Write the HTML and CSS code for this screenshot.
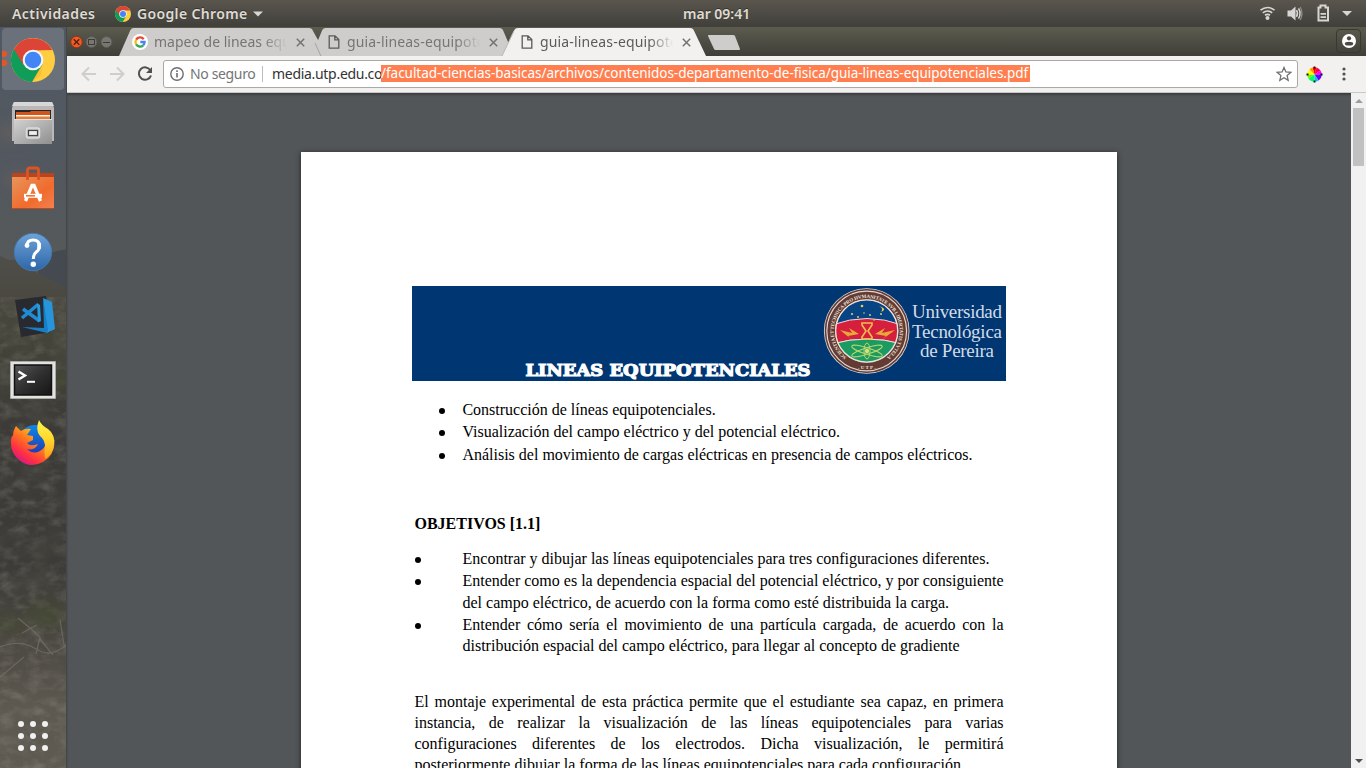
FILE: index.html
```html
<!DOCTYPE html>
<html lang="es">
<head>
<meta charset="utf-8">
<title>guia-lineas-equipotenciales.pdf</title>
<link rel="stylesheet" href="styles.css">
</head>
<body>
<svg class="defs" width="0" height="0">
  <defs>
    <symbol id="chrome" viewBox="0 0 48 48">
      <circle cx="24" cy="24" r="24" fill="#ffcd40"/>
      <path d="M24 24 3.2 12A24 24 0 0 0 23 48L34.5 29Z" fill="#0f9d58"/>
      <path d="M3.2 12A24 24 0 0 1 45.2 13.2L24 13.5 13.5 29.5Z" fill="#db4437"/>
      <path d="M34 28 23 48 33 40Z" fill="#f1b52c" opacity=".5"/>
      <circle cx="24" cy="24" r="11.3" fill="#f4f5f7"/>
      <circle cx="24" cy="24" r="9" fill="#4285f4"/>
    </symbol>
    <symbol id="page" viewBox="0 0 12 14">
      <path d="M1.2.8H7L10.8 4.6V13.2H1.2ZM6.8.8V4.8H10.8" fill="none" stroke="currentColor" stroke-width="1.3"/>
    </symbol>
    <symbol id="close" viewBox="0 0 9 9">
      <path d="M.8.8 8.2 8.2M8.2.8.8 8.2" stroke="currentColor" stroke-width="1.5"/>
    </symbol>
    <linearGradient id="gOrange" x2="1" y2="1"><stop stop-color="#e8955d"/><stop offset=".6" stop-color="#f06b2c"/><stop offset="1" stop-color="#f48152"/></linearGradient>
    <linearGradient id="gGrey" x2="1" y2="1"><stop stop-color="#d2d2d2"/><stop offset="1" stop-color="#8f8f8f"/></linearGradient>
    <linearGradient id="gBlue" x2="0" y2="1"><stop stop-color="#6ea3d8"/><stop offset="1" stop-color="#2d66a9"/></linearGradient>
    <linearGradient id="gTerm" x2="1" y2="1"><stop stop-color="#575757"/><stop offset=".5" stop-color="#303030"/><stop offset="1" stop-color="#151515"/></linearGradient>
    <linearGradient id="gFox" x1=".9" y1="0" x2=".2" y2=".9"><stop stop-color="#fff14a"/><stop offset=".3" stop-color="#ffb41c"/><stop offset=".58" stop-color="#ff6a24"/><stop offset=".82" stop-color="#ff2e45"/><stop offset="1" stop-color="#d91a83"/></linearGradient>
    <linearGradient id="gTail" x2="0" y2="1"><stop stop-color="#fff44f"/><stop offset=".5" stop-color="#ffd72b"/><stop offset="1" stop-color="#ff9c1c"/></linearGradient>
    <linearGradient id="gGlobe" x2="0" y2="1"><stop stop-color="#0d87e8"/><stop offset="1" stop-color="#252da8"/></linearGradient>
  </defs>
</svg>

<header class="topbar">
  <span class="activities">Actividades</span>
  <svg class="app-icon" viewBox="0 0 48 48"><use href="#chrome"/></svg>
  <span class="app-name">Google Chrome</span>
  <svg class="caret" viewBox="0 0 10 6"><path d="M0 .5H10L5 5.5Z"/></svg>
  <span class="clock">mar 09:41</span>
  <svg class="status" viewBox="0 0 106 27">
    <g fill="none" stroke="#d6d6d3" stroke-width="1.7">
      <path d="M.5 10.2Q7.500 4.800 14.500 10.200M2.800 12.800Q7.500 9.200 12.200 12.800M5 15.300Q7.500 13.400 10 15.300"/>
    </g>
    <circle cx="7.500" cy="18" r="2" fill="#d6d6d3"/>
    <path d="M27.500 10.500h3.500l4.500-4v14l-4.500-4h-3.500Z" fill="#d6d6d3"/>
    <path d="M36.500 10.200q2 3.300 0 6.600M38.500 8.400q3.200 5.100 0 10.200" fill="none" stroke="#d6d6d3" stroke-width="1.500"/>
    <path d="M40.200 7q3.500 6.500 0 13" fill="none" stroke="#8b8a84" stroke-width="1.300"/>
    <path d="M58.500 7.500h2v-2h5v2h2.500v13H58.500Z" fill="none" stroke="#d6d6d3" stroke-width="2"/>
    <path d="M60.500 13.800h5.500M60.500 17.200h5.500" stroke="#d6d6d3" stroke-width="1.800"/>
    <path d="M82 11h10l-5 5Z" fill="#d6d6d3"/>
  </svg>
</header>

<div class="desktop">
  <nav class="dock">
    <svg class="wallpaper" viewBox="0 0 67 741" preserveAspectRatio="none">
      <defs>
        <linearGradient id="sky" x2="0" y2="1"><stop stop-color="#505963"/><stop offset=".2" stop-color="#53585f"/><stop offset=".32" stop-color="#555958"/></linearGradient>
        <linearGradient id="rock" x2="0" y2="1"><stop stop-color="#504e4a"/><stop offset=".14" stop-color="#46453a"/><stop offset=".32" stop-color="#3c3b37"/><stop offset=".6" stop-color="#3c3b37"/><stop offset=".76" stop-color="#4c4942"/><stop offset=".88" stop-color="#5d5951"/><stop offset="1" stop-color="#5e5a52"/></linearGradient>
        <filter id="grain" x="0" y="0" width="1" height="1"><feTurbulence type="fractalNoise" baseFrequency=".07 .11" numOctaves="5" seed="8"/><feColorMatrix values="0 0 0 0 .5  0 0 0 0 .47  0 0 0 0 .42  1.8 0 0 0 -.75"/></filter>
        <filter id="dark" x="0" y="0" width="1" height="1"><feTurbulence type="fractalNoise" baseFrequency=".04 .03" numOctaves="4" seed="3"/><feColorMatrix values="0 0 0 0 .1  0 0 0 0 .1  0 0 0 0 .08  0 1.8 0 0 -.75"/></filter>
        <filter id="soft" x="-.5" y="-.5" width="2" height="2"><feGaussianBlur stdDeviation="6"/></filter>
      </defs>
      <rect width="67" height="741" fill="url(#sky)"/>
      <g filter="url(#soft)" fill="#68605d" opacity=".6"><ellipse cx="10" cy="105" rx="13" ry="10"/><ellipse cx="50" cy="22" rx="12" ry="9"/><ellipse cx="22" cy="152" rx="18" ry="8"/></g>
      <path d="M40 228 67 222V310H30Z" fill="#444a50"/>
      <path d="M0 229 9 233 23 232 32 243 49 252 67 261V741H0Z" fill="url(#rock)"/>
      <g opacity=".28"><path d="M0 270H67V741H0Z" filter="url(#grain)"/><path d="M0 270H67V741H0Z" filter="url(#dark)"/></g>
      <g fill="#454b32" opacity=".65" filter="url(#soft)"><ellipse cx="45" cy="588" rx="18" ry="12"/><ellipse cx="9" cy="598" rx="12" ry="8"/><ellipse cx="52" cy="353" rx="18" ry="8"/></g>
      <g fill="none" stroke="#77736c" stroke-width="1.300" opacity=".65"><path d="M0 620Q20 612 36 622T67 617M18 591 31 602 40 610 36 627M22 606 37 598M40 612 53 628M60 593 64 618M0 650 24 630"/></g>
    </svg>
    <div class="dock-item active">
      <i class="dot"></i><i class="dot second"></i>
      <svg width="44" height="44" viewBox="0 0 48 48"><use href="#chrome"/></svg>
    </div>
    <div class="dock-item">
      <svg width="44" height="46" viewBox="0 0 44 46">
        <path d="M3 1H41L43 7V40H1V7Z" fill="#b8b8b8"/><path d="M3 1H41L43 5H1Z" fill="#d7d7d7"/>
        <path d="M4 9H40V20H4Z" fill="#272727"/><path d="M5 11H19L20 10H39V19H5Z" fill="#cf571f"/><path d="M5 14H39V19H5Z" fill="#fff2e4"/><path d="M5 15.500H39V19H5Z" fill="#df8239"/>
        <path d="M3 18H41V43H3Z" fill="url(#gGrey)"/><path d="M3 18.500H41" stroke="#e1e1e1"/>
        <rect x="15.500" y="27" width="13" height="10" rx="2" fill="#bdbdbd" stroke="#dbdbdb" stroke-width="1.500"/><rect x="17.500" y="29.500" width="9" height="5" fill="#eee" stroke="#444" stroke-width="1.200"/>
      </svg>
    </div>
    <div class="dock-item">
      <svg width="44" height="46" viewBox="0 0 44 46">
        <path d="M1 8H43V16H1Z" fill="#b9441d"/><path d="M1 12H43V44H1Z" fill="url(#gOrange)"/><path d="M1 43.500H43" stroke="#b94b21"/>
        <path d="M16.500 15V5Q16.500 3 19 3H25Q27.500 3 27.500 5V15" fill="none" stroke="#dd5424" stroke-width="2.800"/>
        <path d="M14.500 36 21 20.500H23L29.500 36" fill="none" stroke="#fff" stroke-width="3.300"/><path d="M13 30.800H31" stroke="#fff" stroke-width="4"/><path d="M15 30.800H24" stroke="#f17337" stroke-width="1.600"/>
      </svg>
    </div>
    <div class="dock-item">
      <svg width="42" height="42" viewBox="0 0 42 42">
        <circle cx="21" cy="21" r="18.700" fill="url(#gBlue)" stroke="#4778ac"/>
        <path d="M15 14Q15.500 9 21 9Q27.500 9 27.500 15Q27.500 18.500 24.300 21Q21.300 23.500 21.300 28" fill="none" stroke="#fff" stroke-width="3"/><path d="M27 12V18" stroke="#fff" stroke-width="3.500"/><circle cx="15" cy="14.500" r="2.400" fill="#fff"/><circle cx="21.300" cy="33.300" r="2.700" fill="#fff"/>
      </svg>
    </div>
    <div class="dock-item">
      <svg width="44" height="44" viewBox="0 0 44 44">
        <path d="M4 6 35 2 40 38 10 43Z" fill="#292a30"/>
        <path d="M32 4 41 8 44 35 36 39Z" fill="#2795dc"/><path d="M32 4 37 36 36 39 11 33 33 34Z" fill="#167fc6"/>
        <path d="M12 15 28 26.500M11 24 27 10.500" fill="none" stroke="#1f8bd4" stroke-width="3.500"/><path d="M26 9 29 11 30 27 27 28.500Z" fill="#249be3"/>
      </svg>
    </div>
    <div class="dock-item">
      <svg width="46" height="38" viewBox="0 0 46 38">
        <path d="M.5.500H45.500V37.500H.5Z" fill="#e2e2e0" stroke="#a9a9a7"/><path d="M4.500 4H41.500V34H4.500Z" fill="url(#gTerm)" stroke="#111" stroke-width="1.500"/>
        <path d="M8.500 10.500 15 14.500 8.500 18.500" fill="none" stroke="#fff" stroke-width="2.400"/><path d="M17 20.800H25" stroke="#fff" stroke-width="2"/>
      </svg>
    </div>
    <div class="dock-item fox">
      <svg width="46" height="46" viewBox="0 0 46 46">
        <circle cx="25" cy="22" r="17" fill="url(#gGlobe)"/>
        <path d="M6 6 11 11Q15 8 21 9L17 15 23 16V20L17 23Q20 27 28 24Q25 31 17 29Q23 35 30 31Q37 27 36 18Q45 14 44 22Q45 35 33 42Q20 49 9 40Q-2 31 2 15L3 17Q3 10 6 6Z" fill="url(#gFox)"/>
        <path d="M29 0Q31 5 38 9Q46 15 44 26Q42 35 35 39Q34 31 35 25Q34 19 30 16Q25 10 29 0Z" fill="url(#gTail)"/>
      </svg>
    </div>
    <svg class="launcher" width="32" height="32" viewBox="0 0 32 32" fill="#f1f1ef">
      <circle cx="4" cy="4" r="3"/><circle cx="16" cy="4" r="3"/><circle cx="28" cy="4" r="3"/>
      <circle cx="4" cy="16" r="3"/><circle cx="16" cy="16" r="3"/><circle cx="28" cy="16" r="3"/>
      <circle cx="4" cy="28" r="3"/><circle cx="16" cy="28" r="3"/><circle cx="28" cy="28" r="3"/>
    </svg>
  </nav>

  <main class="window">
    <div class="tabstrip">
      <svg class="window-buttons" width="49" height="29" viewBox="0 0 49 29">
        <circle cx="9.500" cy="15" r="5.800" fill="#f05a25" stroke="#893518"/><path d="M6.700 12.200 12.300 17.800M12.300 12.200 6.700 17.800" stroke="#4d2012" stroke-width="1.300"/>
        <circle cx="24.500" cy="15" r="5.500" fill="#777670" stroke="#585750"/><rect x="21.500" y="12.500" width="6" height="5" fill="none" stroke="#3d3c37"/>
        <circle cx="39.500" cy="15" r="5.500" fill="#777670" stroke="#585750"/><path d="M36 15.500H43" stroke="#3d3c37"/>
      </svg>
      <div class="tab first">
        <svg class="tab-shape" viewBox="0 0 208 28" preserveAspectRatio="none"><path d="M0 28 11 3Q12 0 15 0H190Q193 0 194 3L208 28Z" fill="#cfcdcb"/></svg>
        <svg class="favicon google" viewBox="0 0 16 16"><circle cx="8" cy="8" r="8" fill="#fff"/><g fill="none" stroke-width="2.300"><path d="M11.700 5.200A4.600 4.600 0 0 0 4.100 5.700" stroke="#ea4335"/><path d="M4.100 5.700A4.600 4.600 0 0 0 4.100 10.300" stroke="#fbbc05"/><path d="M4.100 10.300A4.600 4.600 0 0 0 11.200 11.300" stroke="#34a853"/><path d="M11.200 11.300A4.600 4.600 0 0 0 12.600 8H8.300" stroke="#4285f4"/></g></svg>
        <span class="tab-title">mapeo de lineas equi</span>
        <svg class="tab-close"><use href="#close"/></svg>
      </div>
      <div class="tab second-tab">
        <svg class="tab-shape" viewBox="0 0 208 28" preserveAspectRatio="none"><path d="M5 28 0 17 6 3Q7 0 10 0H188Q191 0 192 3L203 28Z" fill="#cfcdcb"/><path d="M5 28-1 15" stroke="#a5a3a1"/></svg>
        <svg class="favicon"><use href="#page"/></svg>
        <span class="tab-title">guia-lineas-equipote</span>
        <svg class="tab-close"><use href="#close"/></svg>
      </div>
      <div class="tab current">
        <svg class="tab-shape" viewBox="0 0 208 28" preserveAspectRatio="none"><path d="M0 28 12 3Q13 0 16 0H190Q193 0 194 3L206 28Z" fill="#f2f1f0"/><path d="M0 28 12 3" stroke="#b9b7b5"/></svg>
        <svg class="favicon"><use href="#page"/></svg>
        <span class="tab-title">guia-lineas-equipote</span>
        <svg class="tab-close"><use href="#close"/></svg>
      </div>
      <svg class="new-tab" width="34" height="17" viewBox="0 0 34 17"><path d="M1.500 1H26Q27.500 1 28 2L33 15Q33 16 32 16H8.500Q7.500 16 7 15L1 2Q1 1 1.500 1Z" fill="#cfcdcb"/></svg>
      <div class="profile"><svg width="14" height="14" viewBox="0 0 14 14"><circle cx="7" cy="7" r="7" fill="#fff"/><circle cx="7" cy="4.300" r="2.100" fill="#494941"/><ellipse cx="7" cy="9.700" rx="4.200" ry="1.900" fill="#494941"/></svg></div>
    </div>

    <div class="toolbar">
      <svg class="nav-icons" width="96" height="36" viewBox="0 0 96 36">
        <g fill="none" stroke="#cfcecd" stroke-width="2"><path d="M29 18H16M22 11.500 15.500 18 22 24.500M43 18H56M50 11.500 56.500 18 50 24.500"/></g>
        <path d="M83.500 14.500A6.200 6.200 0 1 0 84 19.500" fill="none" stroke="#505050" stroke-width="2"/><path d="M85 11V17H79Z" fill="#505050"/>
      </svg>
      <div class="omnibox">
        <svg class="info" width="14" height="14" viewBox="0 0 14 14"><circle cx="7" cy="7" r="6.200" fill="none" stroke="#6c6c6c" stroke-width="1.400"/><path d="M7 6V10.500M7 3.300V4.900" stroke="#6c6c6c" stroke-width="1.600"/></svg>
        <span class="security">No seguro</span><i class="divider"></i>
        <span class="host">media.utp.edu.co</span><span class="selected">/facultad-ciencias-basicas/archivos/contenidos-departamento-de-fisica/guia-lineas-equipotenciales.pdf</span>
        <svg class="star" width="16" height="16" viewBox="0 0 16 16"><path d="M8 1.500 9.900 6 14.800 6.400 11.100 9.600 12.200 14.300 8 11.800 3.800 14.300 4.900 9.600 1.200 6.400 6.100 6Z" fill="none" stroke="#707070" stroke-width="1.300"/></svg>
      </div>
      <svg class="wheel" width="17" height="17" viewBox="-8.500 -8.500 17 17">
        <path d="M0 0-2-7A7.300 7.300 0 0 1 2-7Z" fill="#f00"/><path d="M0 0 2-7A7.300 7.300 0 0 1 6-4Z" fill="#f04"/><path d="M0 0 6-4A7.300 7.300 0 0 1 7.200 0Z" fill="#f0f"/><path d="M0 0H7.200A7.300 7.300 0 0 1 4 6Z" fill="#60f"/><path d="M0 0 4 6A7.300 7.300 0 0 1 0 7.300Z" fill="#18b8ff"/><path d="M0 0V7.300A7.300 7.300 0 0 1-6 4Z" fill="#0f6"/><path d="M0 0-6 4A7.300 7.300 0 0 1-7.200 0Z" fill="#6f0"/><path d="M0 0H-7.200A7.300 7.300 0 0 1-5-5Z" fill="#ff0"/><path d="M0 0-5-5A7.300 7.300 0 0 1-2-7Z" fill="#f90"/>
        <path d="M0-8V-6M0 6V8M-8 0H-6M6 0H8" stroke="#111" stroke-width="1.800"/>
      </svg>
      <svg class="menu" width="4" height="16" viewBox="0 0 4 16" fill="#505050"><circle cx="2" cy="3" r="1.600"/><circle cx="2" cy="8" r="1.600"/><circle cx="2" cy="13" r="1.600"/></svg>
    </div>

    <div class="viewer">
      <article class="paper">
        <svg class="banner" width="594" height="95" viewBox="0 0 594 95">
          <defs><clipPath id="sealClip"><circle cx="454.700" cy="45" r="31"/></clipPath><path id="ring" d="M434.600 71.200A33 33 0 1 1 474.800 71.200"/></defs>
          <path d="M0 0H594V95H0Z" fill="#003671"/>
          <text class="banner-title" x="113.500" y="90" textLength="285" lengthAdjust="spacingAndGlyphs">LINEAS EQUIPOTENCIALES</text>
          <circle cx="454.700" cy="45" r="42.800" fill="#e2d9d5"/><circle cx="454.700" cy="45" r="41.200" fill="none" stroke="#623b34" stroke-width="1.500"/>
          <circle cx="454.700" cy="45" r="35.500" fill="none" stroke="#633b33" stroke-width="7.600"/>
          <g clip-path="url(#sealClip)">
            <path d="M420 10H490V50H420Z" fill="#064484"/><path d="M420 39Q455 26 490 39V58Q455 48 420 58Z" fill="#d51f3c" stroke="#e4dce2"/>
            <path d="M420 58Q455 48 490 58V80H420Z" fill="#1b9a62" stroke="#e4e5e3"/>
            <g fill="#e5c95f"><circle cx="450" cy="20" r="1.300"/><circle cx="440" cy="28" r="1.100"/><circle cx="446" cy="31" r="1"/><circle cx="458" cy="29" r="1"/><circle cx="469" cy="28" r="1"/><circle cx="452" cy="27" r=".8"/><circle cx="462" cy="34" r=".8"/></g>
            <path d="M467 20Q472 22 469 26Q476 23 467 20" fill="#e5c95f"/>
            <path d="M428 44 440 47 437 42 447 48 436 50 439 53ZM483 44 470 47 473 42 463 48 474 50 471 53Z" fill="#e8a63b"/>
            <path d="M450 37H460V39L456 45 460 51V53H450V51L454 45 450 39Z" fill="none" stroke="#f1be4e" stroke-width="1.600"/>
            <g fill="none" stroke="#b9d56c" stroke-width="1"><ellipse cx="455" cy="65" rx="16" ry="3.200" transform="rotate(18 455 65)"/><ellipse cx="455" cy="65" rx="16" ry="3.200" transform="rotate(-18 455 65)"/><ellipse cx="455" cy="65" rx="3" ry="8"/></g><circle cx="455" cy="65" r="2.200" fill="#d1e37d"/>
          </g>
          <circle cx="454.700" cy="45" r="31" fill="none" stroke="#eee5df" stroke-width="1.200"/>
          <text class="seal-text"><textPath href="#ring" textLength="164">SCIENTIA ET TECHNICA PRO HVMANITATE SVB LIBERTATIS TVTELA</textPath></text>
          <text class="seal-text" x="446" y="82.500" textLength="18">-UTP-</text>
          <g class="university"><text x="500" y="32" textLength="90">Universidad</text><text x="500" y="52" textLength="90">Tecnológica</text><text x="508" y="71" textLength="74">de Pereira</text></g>
        </svg>
        <ul class="intro">
          <li>Construcción de líneas equipotenciales.</li>
          <li>Visualización del campo eléctrico y del potencial eléctrico.</li>
          <li>Análisis del movimiento de cargas eléctricas en presencia de campos eléctricos.</li>
        </ul>
        <h1>OBJETIVOS [1.1]</h1>
        <ul class="goals">
          <li>Encontrar y dibujar las líneas equipotenciales para tres configuraciones diferentes.</li>
          <li><span class="full">Entender como es la dependencia espacial del potencial eléctrico, y por consiguiente</span><span>del campo eléctrico, de acuerdo con la forma como esté distribuida la carga.</span></li>
          <li><span class="full">Entender cómo sería el movimiento de una partícula cargada, de acuerdo con la</span><span>distribución espacial del campo eléctrico, para llegar al concepto de gradiente</span></li>
        </ul>
        <p><span class="full">El montaje experimental de esta práctica permite que el estudiante sea capaz, en primera</span><span class="full">instancia, de realizar la visualización de las líneas equipotenciales para varias</span><span class="full">configuraciones diferentes de los electrodos. Dicha visualización, le permitirá</span><span>posteriormente dibujar la forma de las líneas equipotenciales para cada configuración.</span></p>
      </article>
      <div class="scrollbar"><i class="arrow"></i><i class="thumb"></i><i class="arrow down"></i></div>
    </div>
  </main>
</div>
</body>
</html>
```

FILE: styles.css
```css
* { box-sizing: border-box; }
body { margin: 0; width: 1366px; height: 768px; overflow: hidden; display: flex; flex-direction: column; font: 14px/20px "Noto Sans", "Open Sans", sans-serif; }
.defs { position: absolute; }
svg { flex: none; }

.topbar { position: relative; height: 27px; display: flex; align-items: center; padding-left: 12px; background: linear-gradient(#5a564e, #403f3a); color: #dfdbd2; font-weight: 600; font-size: 14px; text-shadow: 0 -1px #33322e; }
.activities { width: 103px; letter-spacing: .45px; }
.app-icon { width: 16px; height: 16px; }
.app-name { margin-left: 6px; width: 111px; white-space: nowrap; letter-spacing: .35px; }
.caret { width: 10px; height: 6px; margin-left: 5px; fill: #d6d6d3; }
.clock { position: absolute; left: 683px; letter-spacing: 0; }
.status { width: 106px; height: 27px; margin-left: auto; }

.desktop { height: 741px; display: flex; }
.dock { position: relative; width: 67px; padding-top: 1px; display: flex; flex-direction: column; align-items: center; overflow: hidden; border-right: 1px solid #44474a; }
.wallpaper { position: absolute; inset: 0; width: 67px; height: 741px; }
.dock-item { position: relative; width: 62px; height: 62px; margin-bottom: 2px; padding-top: 2px; display: flex; align-items: center; justify-content: center; }
.active { background: #6b717a; border-radius: 4px; }
.fox { padding-top: 0; }
.dot { position: absolute; left: 0; top: 23px; width: 5px; height: 6px; border-radius: 0 3px 3px 0; background: #e95420; }
.dot.second { top: 32px; }
.launcher { position: relative; margin-top: auto; margin-bottom: 16px; }

.window { flex: 1; min-width: 0; display: flex; flex-direction: column; }
.tabstrip { height: 29px; display: flex; align-items: flex-start; background: linear-gradient(#5c5b4e, #3f3f39); }
.tab { position: relative; height: 28px; margin-top: 1px; display: flex; align-items: center; flex: none; color: #777573; }
.tab-shape { position: absolute; inset: 0; width: 100%; height: 28px; overflow: visible; }
.first { width: 208px; margin-left: 3px; padding-left: 13px; }
.second-tab { width: 203px; margin-left: -11px; padding-left: 12px; }
.current { width: 206px; margin-left: -17px; padding-left: 19px; color: #5c5b59; }
.favicon { position: relative; width: 12px; height: 14px; color: #5a5a5a; }
.favicon.google { width: 16px; height: 16px; }
.tab-title { position: relative; width: 136px; margin-left: 6px; overflow: hidden; white-space: nowrap; -webkit-mask-image: linear-gradient(90deg, #000 80%, transparent 98%); }
.second-tab .tab-title, .current .tab-title { margin-left: 7px; width: 136px; letter-spacing: .15px; }
.tab-close { position: relative; width: 9px; height: 9px; margin-left: 6px; color: #747270; }
.new-tab { margin: 7px 0 0 -1px; }
.profile { margin: 2px 5px 0 auto; width: 25px; height: 24px; border: 1px solid #393933; border-radius: 4px; display: flex; align-items: center; justify-content: center; }

.toolbar { height: 37px; display: flex; align-items: center; background: #f2f1f0; border-bottom: 1px solid #c9c7c5; }
.omnibox { width: 1135px; height: 28px; display: flex; align-items: center; padding: 0 5px 0 6px; background: #fff; border: 1px solid #aaa9a8; border-radius: 3px; white-space: nowrap; color: #333; }
.security { margin-left: 6px; width: 64px; color: #757575; letter-spacing: -.35px; }
.divider { width: 1px; height: 16px; margin: 0 9px 0 8px; background: #bcbcbc; }
.host { width: 109px; letter-spacing: -.3px; }
.selected { width: 649px; height: 17px; margin-bottom: 1px; line-height: 17px; background: #ff7f50; color: #fff; font-size: 13.5px; letter-spacing: -.03px; }
.star { margin-left: auto; }
.wheel { margin-left: 8px; }
.menu { margin-left: 19px; }

.viewer { position: relative; height: 675px; display: flex; justify-content: center; align-items: flex-start; background: #525659; overflow: hidden; box-shadow: inset 0 2px 2px #3d4042; padding-right: 15px; }
.paper { width: 816px; height: 1056px; margin-top: 59px; padding: 134px 111px 0; background: #fff; box-shadow: 0 1px 5px #222; font: 16px/22px "Liberation Serif", serif; color: #000; }
.banner { display: block; }
.banner-title { font: bold 17px "DejaVu Serif", serif; fill: #fff; stroke: #fff; stroke-width: 1.2px; }
.seal-text { font: bold 5px "Liberation Serif", serif; fill: #eee5df; }
.university { font: 19px "Liberation Serif", serif; fill: #d2dbe8; }
ul { list-style: none; margin: 0; padding: 0; white-space: nowrap; }
li { position: relative; }
li::before { content: ""; position: absolute; top: 9px; width: 6px; height: 6px; border-radius: 50%; background: #000; }
.intro { margin-top: 18px; padding-left: 50.400px; line-height: 22.400px; }
.intro li::before { left: -23px; }
h1 { margin: 46.600px 0 13px 2.500px; font-size: 16px; line-height: 22px; }
.goals { padding-left: 50.500px; width: 591.500px; line-height: 21.900px; }
.goals li::before { left: -48px; }
li span, p span { display: block; white-space: nowrap; }
.full { text-align: justify; text-align-last: justify; }
p { margin: 33.500px 0 0 2.500px; width: 589px; line-height: 21px; }
.scrollbar { position: absolute; right: 0; top: 0; width: 15px; height: 100%; background: #f1f1f1; display: flex; flex-direction: column; align-items: center; }
.arrow { width: 0; height: 0; margin: 6px 0 5px; border: 4px solid transparent; border-top: 0; border-bottom-color: #9d9d9d; }
.thumb { width: 11px; height: 58px; background: #c1c1c1; }
.down { margin-top: auto; border: 4px solid transparent; border-bottom: 0; border-top-color: #505050; }
```
